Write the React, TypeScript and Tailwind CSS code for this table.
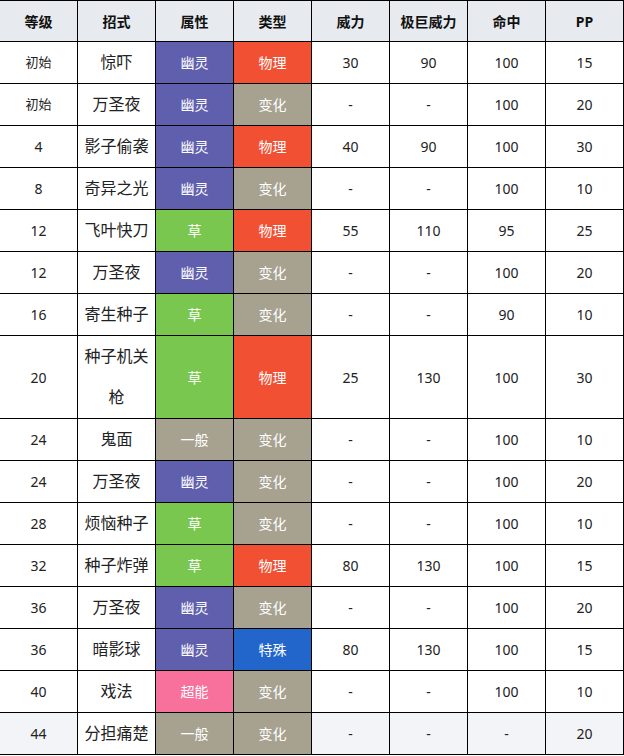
import React from 'react';

type Move = {
  lv: string;
  name: string;
  attr: string;
  kind: string;
  power: string;
  maxPower: string;
  acc: string;
  pp: string;
};

const MOVES: Move[] = [
  { lv: '初始', name: '惊吓', attr: '幽灵', kind: '物理', power: '30', maxPower: '90', acc: '100', pp: '15' },
  { lv: '初始', name: '万圣夜', attr: '幽灵', kind: '变化', power: '-', maxPower: '-', acc: '100', pp: '20' },
  { lv: '4', name: '影子偷袭', attr: '幽灵', kind: '物理', power: '40', maxPower: '90', acc: '100', pp: '30' },
  { lv: '8', name: '奇异之光', attr: '幽灵', kind: '变化', power: '-', maxPower: '-', acc: '100', pp: '10' },
  { lv: '12', name: '飞叶快刀', attr: '草', kind: '物理', power: '55', maxPower: '110', acc: '95', pp: '25' },
  { lv: '12', name: '万圣夜', attr: '幽灵', kind: '变化', power: '-', maxPower: '-', acc: '100', pp: '20' },
  { lv: '16', name: '寄生种子', attr: '草', kind: '变化', power: '-', maxPower: '-', acc: '90', pp: '10' },
  { lv: '20', name: '种子机关枪', attr: '草', kind: '物理', power: '25', maxPower: '130', acc: '100', pp: '30' },
  { lv: '24', name: '鬼面', attr: '一般', kind: '变化', power: '-', maxPower: '-', acc: '100', pp: '10' },
  { lv: '24', name: '万圣夜', attr: '幽灵', kind: '变化', power: '-', maxPower: '-', acc: '100', pp: '20' },
  { lv: '28', name: '烦恼种子', attr: '草', kind: '变化', power: '-', maxPower: '-', acc: '100', pp: '10' },
  { lv: '32', name: '种子炸弹', attr: '草', kind: '物理', power: '80', maxPower: '130', acc: '100', pp: '15' },
  { lv: '36', name: '万圣夜', attr: '幽灵', kind: '变化', power: '-', maxPower: '-', acc: '100', pp: '20' },
  { lv: '36', name: '暗影球', attr: '幽灵', kind: '特殊', power: '80', maxPower: '130', acc: '100', pp: '15' },
  { lv: '40', name: '戏法', attr: '超能', kind: '变化', power: '-', maxPower: '-', acc: '100', pp: '10' },
  { lv: '44', name: '分担痛楚', attr: '一般', kind: '变化', power: '-', maxPower: '-', acc: '-', pp: '20' },
];

const ATTR_BG: Record<string, string> = {
  幽灵: 'bg-[#5f5fae]',
  草: 'bg-[#79c74f]',
  一般: 'bg-[#a7a190]',
  超能: 'bg-[#f8709c]',
};

const KIND_BG: Record<string, string> = {
  物理: 'bg-[#f25033]',
  变化: 'bg-[#a7a190]',
  特殊: 'bg-[#2266cc]',
};

const HEADERS = ['等级', '招式', '属性', '类型', '威力', '极巨威力', '命中', 'PP'];

const cell = 'flex items-center justify-center border-r border-b border-black text-center';

export default function App() {
  return (
    <div
      className="w-[625px] -ml-px overflow-hidden bg-white text-[#222]"
      style={{ fontFamily: '"Noto Sans", "Noto Sans CJK SC", sans-serif' }}
    >
      <div className="border-t border-l border-black">
        {/* 表头 */}
        <div className="grid grid-cols-8 h-[41px] bg-[#e7eaee]">
          {HEADERS.map(h => (
            <div key={h} className={`${cell} text-[14px] font-bold text-[#111]`}>{h}</div>
          ))}
        </div>

        {MOVES.map((m, i) => {
          const last = i === MOVES.length - 1;
          const rowBg = last ? 'bg-[#f2f4f7]' : 'bg-white';
          return (
            <div key={i} className="grid grid-cols-8 min-h-[42px]">
              <div className={`${cell} ${rowBg} ${m.lv === '初始' ? 'text-[13px]' : 'text-[14px]'}`}>{m.lv}</div>
              <div className={`${cell} bg-white text-[16px] leading-[41px] px-0`}>
                <span className="block w-full break-all">{m.name}</span>
              </div>
              <div className={`${cell} ${ATTR_BG[m.attr]} text-[14px] text-white`}>{m.attr}</div>
              <div className={`${cell} ${KIND_BG[m.kind]} text-[14px] text-white`}>{m.kind}</div>
              <div className={`${cell} ${rowBg} text-[14px]`}>{m.power}</div>
              <div className={`${cell} ${rowBg} text-[14px]`}>{m.maxPower}</div>
              <div className={`${cell} ${rowBg} text-[14px]`}>{m.acc}</div>
              <div className={`${cell} ${rowBg} text-[14px]`}>{m.pp}</div>
            </div>
          );
        })}
      </div>
    </div>
  );
}
